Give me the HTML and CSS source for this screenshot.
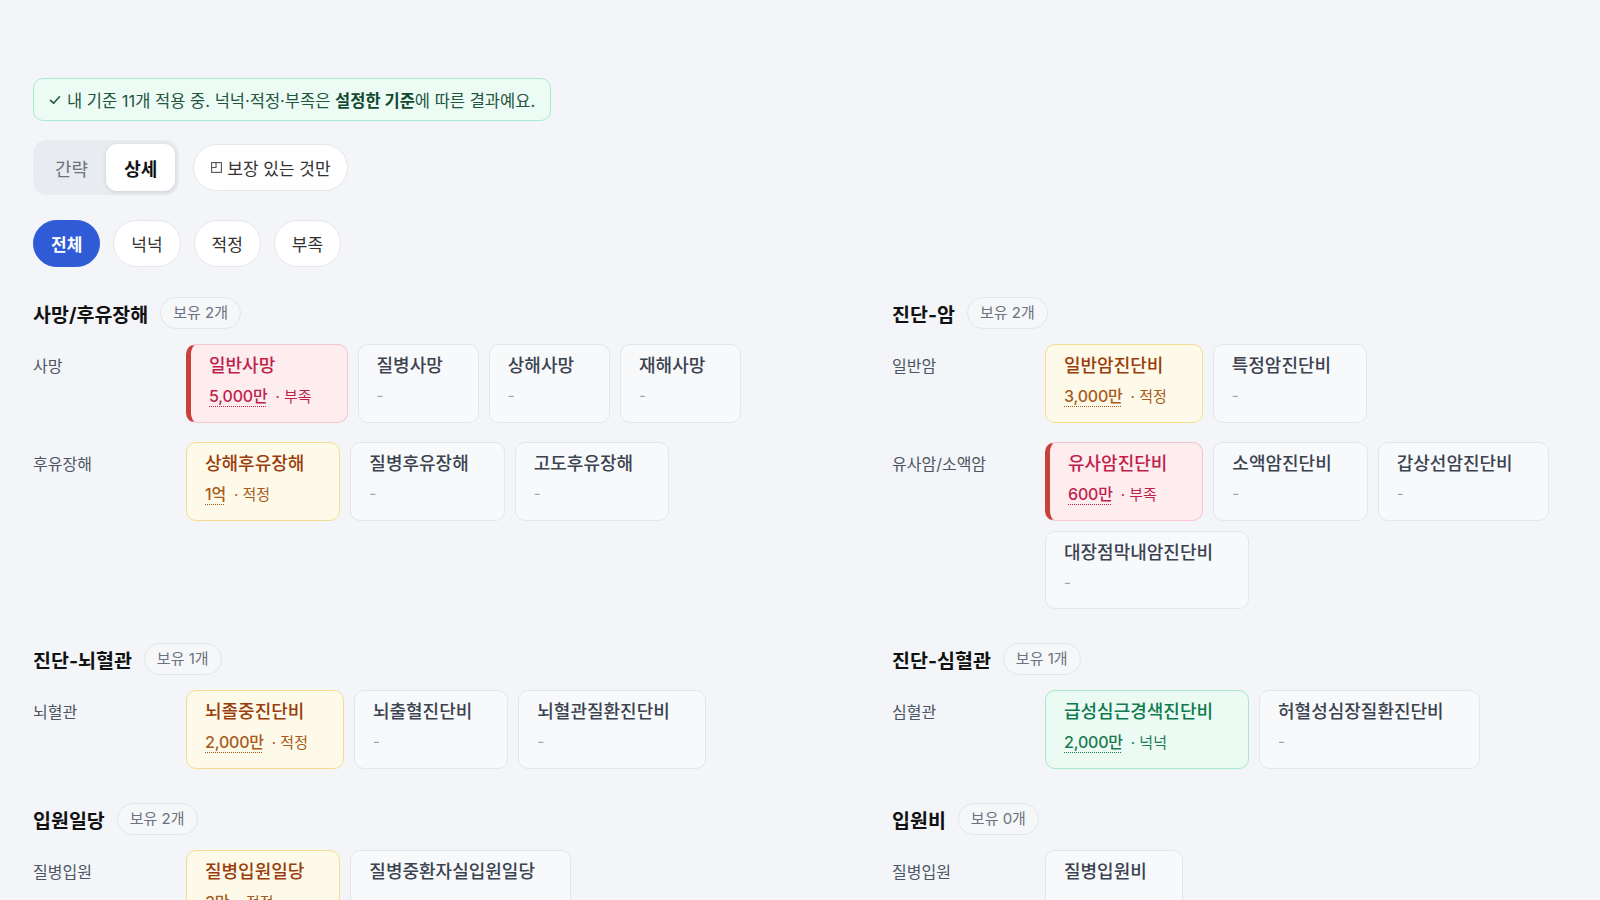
FILE: index.html
```html
<!DOCTYPE html>
<html lang="ko">
<head>
    <meta charset="UTF-8">
    <meta name="viewport" content="width=device-width, initial-scale=1.0">
    <title>보장 분석</title>
    <link rel="stylesheet" href="styles.css">
</head>
<body>
    <div class="page">
        <div class="notice">
            <svg class="notice-check" width="12" height="12" viewBox="0 0 12 12"><path d="M1.5 6.3 L4.6 9.2 L10.5 2.8" fill="none" stroke="currentColor" stroke-width="1.6" stroke-linecap="round" stroke-linejoin="round"/></svg>
            <span>내 기준 11개 적용 중. 넉넉·적정·부족은 <b>설정한 기준</b>에 따른 결과예요.</span>
        </div>

        <div class="toolbar">
            <div class="seg">
                <button class="seg-btn">간략</button>
                <button class="seg-btn on">상세</button>
            </div>
            <button class="pill">
                <svg width="11" height="11" viewBox="0 0 11 11"><rect x="0.6" y="0.6" width="9.8" height="9.8" fill="none" stroke="#555" stroke-width="1.1"/><path d="M0.6 5.5 H5 V0.6" fill="none" stroke="#555" stroke-width="1.1"/></svg>
                보장 있는 것만
            </button>
        </div>

        <div class="chips">
            <button class="chip on">전체</button>
            <button class="chip">넉넉</button>
            <button class="chip">적정</button>
            <button class="chip">부족</button>
        </div>

        <div class="sections">
            <!-- 사망/후유장해 -->
            <section class="group">
                <div class="group-head"><h2>사망/후유장해</h2><span class="badge">보유 2개</span></div>
                <div class="row">
                    <div class="row-label">사망</div>
                    <div class="cards">
                        <div class="card short">
                            <div class="card-title">일반사망</div>
                            <div class="card-sub"><span class="amt">5,000만</span><span class="status">· 부족</span></div>
                        </div>
                        <div class="card"><div class="card-title">질병사망</div><div class="card-sub">-</div></div>
                        <div class="card"><div class="card-title">상해사망</div><div class="card-sub">-</div></div>
                        <div class="card"><div class="card-title">재해사망</div><div class="card-sub">-</div></div>
                    </div>
                </div>
                <div class="row">
                    <div class="row-label">후유장해</div>
                    <div class="cards">
                        <div class="card fit">
                            <div class="card-title">상해후유장해</div>
                            <div class="card-sub"><span class="amt">1억</span><span class="status">· 적정</span></div>
                        </div>
                        <div class="card"><div class="card-title">질병후유장해</div><div class="card-sub">-</div></div>
                        <div class="card"><div class="card-title">고도후유장해</div><div class="card-sub">-</div></div>
                    </div>
                </div>
            </section>

            <!-- 진단-암 -->
            <section class="group">
                <div class="group-head"><h2>진단-암</h2><span class="badge">보유 2개</span></div>
                <div class="row">
                    <div class="row-label">일반암</div>
                    <div class="cards">
                        <div class="card fit">
                            <div class="card-title">일반암진단비</div>
                            <div class="card-sub"><span class="amt">3,000만</span><span class="status">· 적정</span></div>
                        </div>
                        <div class="card"><div class="card-title">특정암진단비</div><div class="card-sub">-</div></div>
                    </div>
                </div>
                <div class="row">
                    <div class="row-label">유사암/소액암</div>
                    <div class="cards">
                        <div class="card short">
                            <div class="card-title">유사암진단비</div>
                            <div class="card-sub"><span class="amt">600만</span><span class="status">· 부족</span></div>
                        </div>
                        <div class="card"><div class="card-title">소액암진단비</div><div class="card-sub">-</div></div>
                        <div class="card"><div class="card-title">갑상선암진단비</div><div class="card-sub">-</div></div>
                        <div class="card"><div class="card-title">대장점막내암진단비</div><div class="card-sub">-</div></div>
                    </div>
                </div>
            </section>

            <!-- 진단-뇌혈관 -->
            <section class="group">
                <div class="group-head"><h2>진단-뇌혈관</h2><span class="badge">보유 1개</span></div>
                <div class="row">
                    <div class="row-label">뇌혈관</div>
                    <div class="cards">
                        <div class="card fit">
                            <div class="card-title">뇌졸중진단비</div>
                            <div class="card-sub"><span class="amt">2,000만</span><span class="status">· 적정</span></div>
                        </div>
                        <div class="card"><div class="card-title">뇌출혈진단비</div><div class="card-sub">-</div></div>
                        <div class="card"><div class="card-title">뇌혈관질환진단비</div><div class="card-sub">-</div></div>
                    </div>
                </div>
            </section>

            <!-- 진단-심혈관 -->
            <section class="group">
                <div class="group-head"><h2>진단-심혈관</h2><span class="badge">보유 1개</span></div>
                <div class="row">
                    <div class="row-label">심혈관</div>
                    <div class="cards">
                        <div class="card enough">
                            <div class="card-title">급성심근경색진단비</div>
                            <div class="card-sub"><span class="amt">2,000만</span><span class="status">· 넉넉</span></div>
                        </div>
                        <div class="card"><div class="card-title">허혈성심장질환진단비</div><div class="card-sub">-</div></div>
                    </div>
                </div>
            </section>

            <!-- 입원일당 -->
            <section class="group">
                <div class="group-head"><h2>입원일당</h2><span class="badge">보유 2개</span></div>
                <div class="row">
                    <div class="row-label">질병입원</div>
                    <div class="cards">
                        <div class="card fit">
                            <div class="card-title">질병입원일당</div>
                            <div class="card-sub"><span class="amt">3만</span><span class="status">· 적정</span></div>
                        </div>
                        <div class="card"><div class="card-title">질병중환자실입원일당</div><div class="card-sub">-</div></div>
                    </div>
                </div>
            </section>

            <!-- 입원비 -->
            <section class="group">
                <div class="group-head"><h2>입원비</h2><span class="badge">보유 0개</span></div>
                <div class="row">
                    <div class="row-label">질병입원</div>
                    <div class="cards">
                        <div class="card"><div class="card-title">질병입원비</div><div class="card-sub">-</div></div>
                    </div>
                </div>
            </section>
        </div>
    </div>
</body>
</html>
```

FILE: styles.css
```css
body {
    margin: 0;
    background-color: #f3f5f8;
    color: #222;
    font-family: Inter, "Noto Sans CJK KR", sans-serif;
}

button {
    font-family: inherit;
    cursor: pointer;
}

.page {
    padding: 78px 32px 40px 33px;
}

/* 안내 배너 */
.notice {
    display: inline-flex;
    align-items: center;
    gap: 6px;
    height: 41px;
    padding: 0 15px 0 15px;
    background-color: #edfbf5;
    border: 1.5px solid #a9eacf;
    border-radius: 10px;
    font-size: 16.5px;
    color: #23553f;
}

.notice b {
    color: #0f4a31;
    font-weight: 700;
}

.notice-check {
    color: #1f5a42;
}

/* 보기 전환 */
.toolbar {
    display: flex;
    align-items: center;
    gap: 14px;
    margin-top: 19px;
}

.seg {
    display: flex;
    padding: 4px;
    background-color: #e8ebef;
    border-radius: 14px;
}

.seg-btn {
    height: 47px;
    padding: 0 18px;
    border: none;
    border-radius: 11px;
    background: transparent;
    font-size: 18px;
    color: #6b7280;
}

.seg-btn.on {
    background-color: #fff;
    color: #111;
    font-weight: 700;
    box-shadow: 0 1px 4px rgba(0, 0, 0, 0.12);
}

.pill {
    display: inline-flex;
    align-items: center;
    gap: 5px;
    height: 47px;
    padding: 0 16px 0 17px;
    background-color: #fff;
    border: 1px solid #e3e6eb;
    border-radius: 24px;
    font-size: 17px;
    color: #333;
}

/* 필터 */
.chips {
    display: flex;
    gap: 13px;
    margin-top: 25px;
}

.chip {
    height: 47px;
    padding: 0 17px;
    background-color: #fff;
    border: 1px solid #e5e7eb;
    border-radius: 24px;
    font-size: 17px;
    color: #333;
}

.chip.on {
    background-color: #2f5bd6;
    border-color: #2f5bd6;
    color: #fff;
    font-weight: 600;
}

/* 보장 그룹 */
.sections {
    display: grid;
    grid-template-columns: 811px 1fr;
    column-gap: 48px;
    row-gap: 34px;
    margin-top: 30px;
}

.group-head {
    display: flex;
    align-items: center;
    gap: 12px;
    margin-bottom: 15px;
}

.group-head h2 {
    margin: 0;
    font-size: 19.5px;
    font-weight: 700;
    color: #111;
}

.badge {
    height: 30px;
    line-height: 30px;
    padding: 0 12px;
    border: 1px solid #e3e6ea;
    border-radius: 16px;
    background-color: #f6f7f9;
    font-size: 15px;
    color: #6b7280;
}

.row {
    display: flex;
    margin-bottom: 19px;
}

.row:last-child {
    margin-bottom: 0;
}

.row-label {
    width: 153px;
    flex-shrink: 0;
    padding-top: 9px;
    line-height: 26px;
    font-size: 16px;
    color: #4b5563;
}

.cards {
    display: flex;
    flex-wrap: wrap;
    gap: 10px 10px;
}

.card {
    padding: 8px 35px 14px 18px;
    background-color: #f7f9fb;
    border: 1px solid #e3e7ec;
    border-radius: 10px;
}

.card-title {
    line-height: 26px;
    font-size: 18px;
    font-weight: 500;
    color: #3b4350;
    white-space: nowrap;
}

.card-sub {
    margin-top: 6px;
    line-height: 22px;
    font-size: 15px;
    color: #9ca3af;
    white-space: nowrap;
}

.amt {
    font-size: 16px;
    font-weight: 500;
    letter-spacing: -0.2px;
    text-decoration: underline dotted;
    text-decoration-thickness: 1px;
    text-underline-offset: 4px;
}

.status {
    margin-left: 8px;
    font-size: 15px;
}

.card.short {
    background-color: #fdedef;
    border-color: #f6c6cc;
    border-left: 5px solid #c8403b;
}

.card.short .card-title,
.card.short .card-sub {
    color: #c01f4c;
}

.card.fit {
    background-color: #fefae9;
    border-color: #f5dd8f;
}

.card.fit .card-title {
    color: #9a3d0c;
}

.card.fit .card-sub {
    color: #a85a1c;
}

.card.enough {
    background-color: #ebfbf3;
    border-color: #a9e8c9;
}

.card.enough .card-title {
    color: #0f7a4f;
}

.card.enough .card-sub {
    color: #1a7a52;
}
```
